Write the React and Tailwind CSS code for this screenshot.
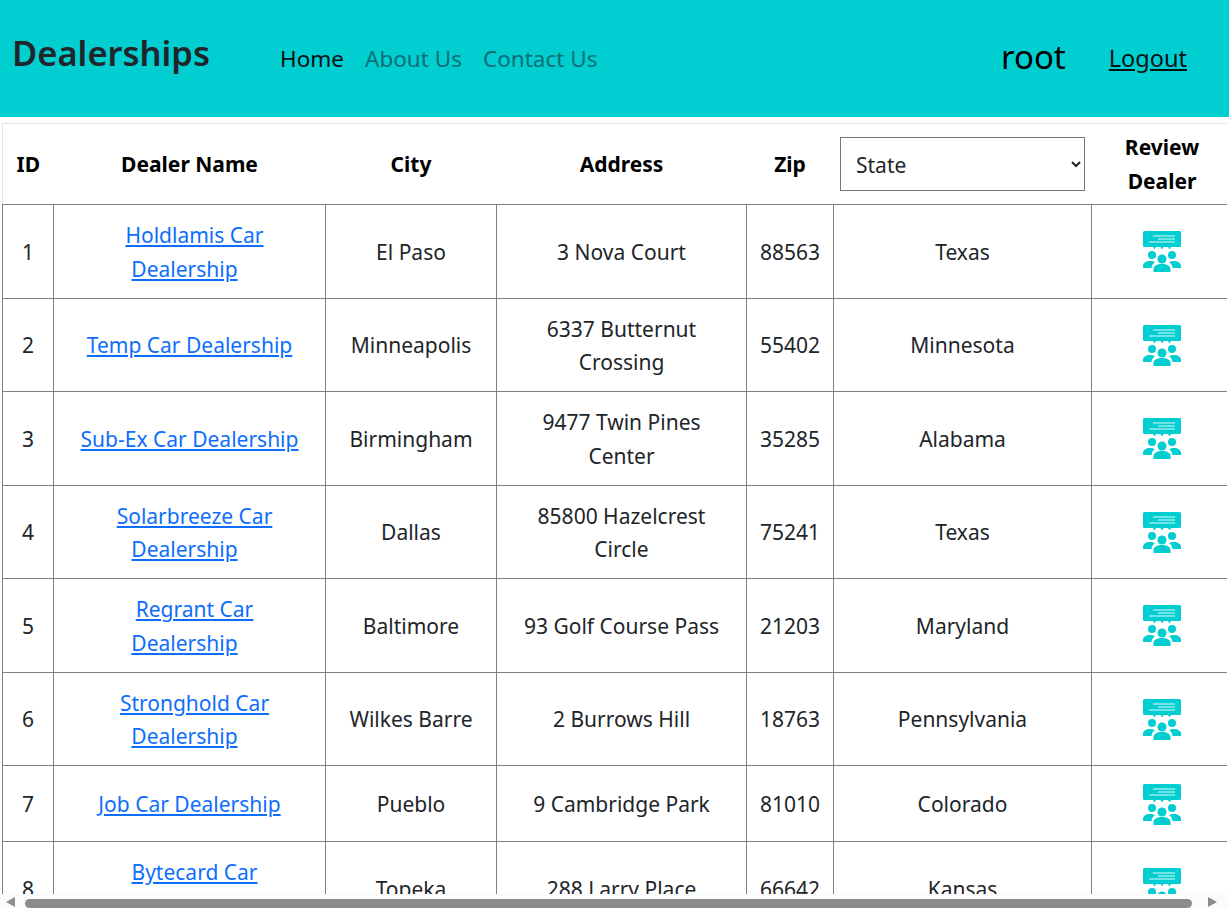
const DEALERS = [
  { id: 1, name: 'Holdlamis Car Dealership', city: 'El Paso', address: '3 Nova Court', zip: '88563', state: 'Texas' },
  { id: 2, name: 'Temp Car Dealership', city: 'Minneapolis', address: '6337 Butternut Crossing', zip: '55402', state: 'Minnesota' },
  { id: 3, name: 'Sub-Ex Car Dealership', city: 'Birmingham', address: '9477 Twin Pines Center', zip: '35285', state: 'Alabama' },
  { id: 4, name: 'Solarbreeze Car Dealership', city: 'Dallas', address: '85800 Hazelcrest Circle', zip: '75241', state: 'Texas' },
  { id: 5, name: 'Regrant Car Dealership', city: 'Baltimore', address: '93 Golf Course Pass', zip: '21203', state: 'Maryland' },
  { id: 6, name: 'Stronghold Car Dealership', city: 'Wilkes Barre', address: '2 Burrows Hill', zip: '18763', state: 'Pennsylvania' },
  { id: 7, name: 'Job Car Dealership', city: 'Pueblo', address: '9 Cambridge Park', zip: '81010', state: 'Colorado' },
  { id: 8, name: 'Bytecard Car Dealership', city: 'Topeka', address: '288 Larry Place', zip: '66642', state: 'Kansas' },
]

function ReviewIcon() {
  return (
    <svg viewBox="0 0 50 50" className="block mx-auto w-[50px] h-[50px]">
      <path fill="#00ced1" d="M7.500 5h35a1.500 1.500 0 0 1 1.500 1.500v13a1.500 1.500 0 0 1-1.500 1.500H34l-1.500 2.500L31 21h-4.500L25 23.500 23.500 21H19l-1.500 2.500L16 21H7.500A1.500 1.500 0 0 1 6 19.500v-13A1.500 1.500 0 0 1 7.500 5z" />
      <path stroke="#fff" strokeWidth="1" opacity="0.9" d="M16 10h22M21 13h17M12 16h26" />
      <circle cx="15" cy="29" r="4" fill="#00ced1" />
      <circle cx="35" cy="29" r="4" fill="#00ced1" />
      <circle cx="25" cy="33" r="4.500" fill="#00ced1" />
      <path fill="#00ced1" d="M6 42v-2c0-3 3-5 7-5 2 0 3.500.4 5 1.200-2 1.300-3.500 3.300-3.500 5.800zM44 42v-2c0-3-3-5-7-5-2 0-3.500.4-5 1.200 2 1.300 3.500 3.300 3.500 5.800z" />
      <path fill="#00ced1" d="M16.500 46v-3c0-3 3.500-5 8.500-5s8.500 2 8.500 5v3z" />
    </svg>
  )
}

export default function App() {
  return (
    <div className="h-screen flex flex-col overflow-hidden bg-white text-[#212529] font-['Noto_Sans',sans-serif] text-[21px] leading-[33.75px]">
      <nav className="h-[117px] shrink-0 bg-[#00ced1] flex items-center pl-3 pr-[42px]">
        <span className="text-[34.500px] font-semibold leading-none -mt-[11px] w-[268px] shrink-0">Dealerships</span>
        <div className="flex gap-[21px] text-[22.5px] text-[#0b6f73]">
          <a className="text-[#0a1214]">Home</a>
          <a>About Us</a>
          <a>Contact Us</a>
        </div>
        <span className="ml-auto -mt-[4px] text-[33px] text-black font-normal">root</span>
        <a className="ml-[43px] text-[23.5px] text-[#0a1214] underline">Logout</a>
      </nav>

      <div className="flex-1 min-h-0 overflow-hidden pt-[6px] pl-[2px] pr-[2px]">
        <table className="table-fixed border-collapse w-[1224px] text-center">
          <colgroup>
            <col className="w-[51px]" />
            <col className="w-[272px]" />
            <col className="w-[171px]" />
            <col className="w-[250px]" />
            <col className="w-[87px]" />
            <col className="w-[258px]" />
            <col className="w-[135px]" />
          </colgroup>
          <thead>
            <tr className="h-[81px] font-bold text-black border-t border-l border-[#e2e2e2] border-b-[#808080]">
              <th className="border-b border-[#808080] pt-[2px]">ID</th>
              <th className="border-b border-[#808080] pt-[2px]">Dealer Name</th>
              <th className="border-b border-[#808080] pt-[2px]">City</th>
              <th className="border-b border-[#808080] pt-[2px]">Address</th>
              <th className="border-b border-[#808080] pt-[2px]">Zip</th>
              <th className="border-b border-[#808080] font-normal px-[6px]">
                <select className="w-[245px] h-[54px] border border-[#767676] pl-[11px] pr-1 pt-[2px] text-[#212529] bg-white">
                  <option>State</option>
                </select>
              </th>
              <th className="border-b border-[#808080] pt-[2px] pl-[6px]">Review<br />Dealer</th>
            </tr>
          </thead>
          <tbody>
            {DEALERS.map((d) => (
              <tr key={d.id}>
                <td className="border-l border-r border-b border-[#808080] pt-[14px] pb-[11px]">{d.id}</td>
                <td className="border-r border-b border-[#808080] pt-[14px] pb-[11px] px-[13px]">
                  <a className="px-[10px] text-[#0d6efd] underline">{d.name}</a>
                </td>
                <td className="border-r border-b border-[#808080] pt-[14px] pb-[11px]">{d.city}</td>
                <td className="border-r border-b border-[#808080] pt-[14px] pb-[11px] px-[25px]">{d.address}</td>
                <td className="border-r border-b border-[#808080] pt-[14px] pb-[11px]">{d.zip}</td>
                <td className="border-r border-b border-[#808080] pt-[14px] pb-[11px]">{d.state}</td>
                <td className="border-b border-[#808080] py-[12.5px] pl-[6px]"><ReviewIcon /></td>
              </tr>
            ))}
          </tbody>
        </table>
      </div>

      {/* horizontal scrollbar */}
      <div className="h-[14px] shrink-0 bg-[#fbfbfb] flex items-end pl-[6px] pr-[12px]">
        <span className="mb-[1px] border-y-[5px] border-y-transparent border-r-[9px] border-r-[#8c8c8c]" />
        <div className="ml-[10px] w-[1167px] h-[9px] rounded-l-full rounded-r-full bg-[#8c8c8c]" />
        <span className="ml-auto mb-[1px] border-y-[5px] border-y-transparent border-l-[9px] border-l-[#8c8c8c]" />
      </div>
    </div>
  )
}
